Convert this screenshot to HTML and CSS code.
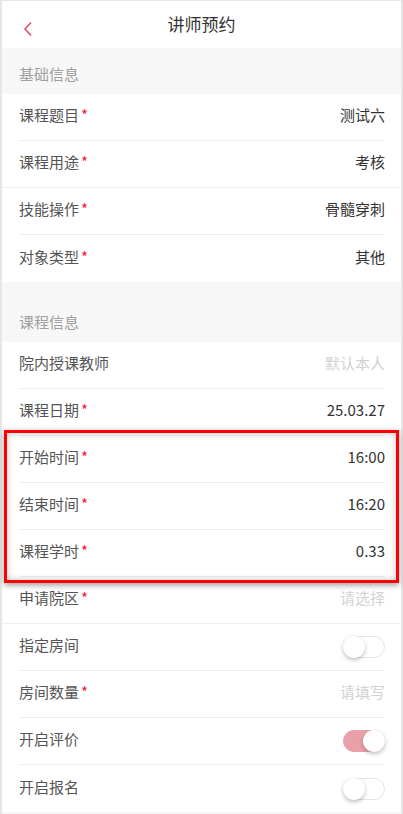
FILE: index.html
```html
<!DOCTYPE html>
<html lang="zh-CN">
<head>
    <meta charset="UTF-8">
    <meta name="viewport" content="width=device-width, initial-scale=1.0">
    <title>讲师预约</title>
    <link rel="stylesheet" href="styles.css">
</head>
<body>
    <div class="page">
        <div class="navbar">
            <span class="back">
                <svg width="10" height="16" viewBox="0 0 10 16"><path d="M8 1.5 L2 8 L8 14.5" fill="none" stroke="#e0506a" stroke-width="1.6"/></svg>
            </span>
            <div class="title">讲师预约</div>
        </div>

        <div class="group-title">基础信息</div>
        <div class="cell"><span class="label">课程题目<i>*</i></span><span class="value">测试六</span></div>
        <div class="cell full"><span class="label">课程用途<i>*</i></span><span class="value">考核</span></div>
        <div class="cell"><span class="label">技能操作<i>*</i></span><span class="value">骨髓穿刺</span></div>
        <div class="cell last"><span class="label">对象类型<i>*</i></span><span class="value">其他</span></div>

        <div class="group-title tall">课程信息</div>
        <div class="cell"><span class="label">院内授课教师</span><span class="value empty">默认本人</span></div>
        <div class="cell"><span class="label">课程日期<i>*</i></span><span class="value">25.03.27</span></div>
        <div class="hl">
            <div class="cell"><span class="label">开始时间<i>*</i></span><span class="value">16:00</span></div>
            <div class="cell"><span class="label">结束时间<i>*</i></span><span class="value">16:20</span></div>
            <div class="cell"><span class="label">课程学时<i>*</i></span><span class="value">0.33</span></div>
        </div>
        <div class="cell full"><span class="label">申请院区<i>*</i></span><span class="value empty">请选择</span></div>
        <div class="cell"><span class="label">指定房间</span><span class="switch"></span></div>
        <div class="cell"><span class="label">房间数量<i>*</i></span><span class="value empty">请填写</span></div>
        <div class="cell"><span class="label">开启评价</span><span class="switch on"></span></div>
        <div class="cell last"><span class="label">开启报名</span><span class="switch"></span></div>
        <div class="footer-gap"></div>
    </div>
</body>
</html>
```

FILE: styles.css
```css
body {
    margin: 0;
    background-color: #e6e6e6;
    font-family: "Noto Sans CJK SC", "Noto Sans", sans-serif;
}
.page {
    width: 399px;
    margin-left: 2px;
    margin-top: 1px;
    background: #fff;
    min-height: 813px;
}
.navbar {
    height: 47px;
    position: relative;
    display: flex;
    align-items: center;
    justify-content: center;
}
.back {
    position: absolute;
    left: 21px;
    top: 17px;
}
.title {
    font-size: 17px;
    color: #333;
    margin-bottom: 2px;
}
.group-title {
    background-color: #f7f7f7;
    height: 46px;
    box-sizing: border-box;
    padding: 15px 0 0 17px;
    font-size: 15px;
    line-height: 22px;
    color: #a0a0a0;
}
.group-title.tall {
    height: 60px;
    padding-top: 29px;
}
.cell {
    height: 47px;
    margin: 0 16px 0 17px;
    padding-bottom: 4px;
    border-bottom: 1px solid #efefef;
    box-sizing: border-box;
    display: flex;
    align-items: center;
    justify-content: space-between;
    font-size: 15px;
    line-height: 20px;
}
.cell.full {
    margin: 0;
    padding: 0 16px 4px 17px;
}
.cell.last {
    border-bottom: none;
}
.label {
    color: #555;
}
.label i {
    font-style: normal;
    color: #ee1a3a;
    margin-left: 2px;
}
.value {
    color: #333;
}
.value.empty {
    color: #d2d2d2;
}
.switch {
    width: 42px;
    height: 22px;
    margin-top: 4px;
    border-radius: 11px;
    border: 1px solid #e4e4e4;
    box-sizing: border-box;
    position: relative;
    background: #fff;
}
.switch::after {
    content: "";
    position: absolute;
    left: -1px;
    top: -1px;
    width: 22px;
    height: 22px;
    border-radius: 50%;
    background: #fff;
    box-shadow: 0 2px 4px rgba(0, 0, 0, 0.25);
}
.switch.on {
    background: #eaa0a8;
    border-color: #eaa0a8;
}
.switch.on::after {
    left: auto;
    right: -1px;
}
.hl {
    position: relative;
}
.hl::after {
    content: "";
    position: absolute;
    top: -6px;
    bottom: -6px;
    left: 2px;
    right: 2px;
    border: 3px solid #ff0000;
    box-shadow: 0 2px 6px rgba(0, 0, 0, 0.4), inset 0 0 6px rgba(0, 0, 0, 0.25);
    pointer-events: none;
}
.footer-gap {
    height: 6px;
    background: #f7f7f7;
}
```
